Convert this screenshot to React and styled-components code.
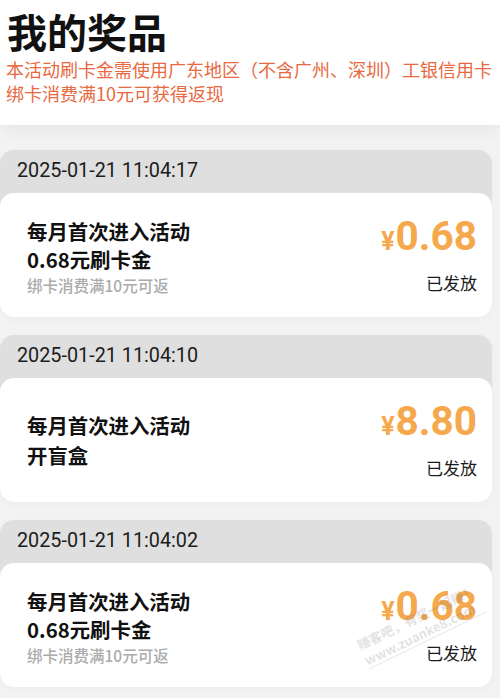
import styled, { createGlobalStyle } from "styled-components";

const GlobalStyle = createGlobalStyle`
  body {
    margin: 0;
    background: #f3f3f3;
    font-family: Roboto, "Noto Sans CJK SC", sans-serif;
  }
`;

const Page = styled.div`
  position: relative;
  width: 500px;
  height: 698px;
  overflow: hidden;
  background: #f3f3f3;
`;

const Header = styled.div`
  background: #fff;
  height: 125px;
  box-sizing: border-box;
  padding: 8px 6px 0 7px;
  box-shadow: 0 6px 14px rgba(0, 0, 0, 0.05);
`;

const Title = styled.h1`
  margin: 0;
  font-size: 40px;
  line-height: 46px;
  font-weight: 700;
  color: #111;
  font-family: "Noto Sans CJK SC", sans-serif;
`;

const Notice = styled.p`
  margin: 3px 0 0 -1px;
  font-size: 18px;
  line-height: 24px;
  color: #e8693f;
  font-family: "Noto Sans CJK SC", sans-serif;
`;

const List = styled.div`
  display: flex;
  flex-direction: column;
  gap: 18px;
  padding: 25px 8px 0 0;
`;

const Card = styled.div`
  background: #dfdfdf;
  border-radius: 14px;
  box-shadow: 0 2px 8px rgba(0, 0, 0, 0.03);
`;

const Stamp = styled.div`
  height: 43px;
  display: flex;
  align-items: center;
  padding: 0 0 3px 17px;
  box-sizing: border-box;
  font-size: 19.8px;
  color: #1c1c1c;
`;

const Body = styled.div`
  height: 124px;
  background: #fff;
  border-radius: 14px;
  display: flex;
  align-items: center;
  justify-content: space-between;
  padding: 0 15px 0 27px;
`;

const Info = styled.div`
  display: flex;
  flex-direction: column;
  font-family: "Noto Sans CJK SC", sans-serif;
  padding-top: ${(p) => (p.$short ? "0" : "3px")};
`;

const Line = styled.div`
  font-size: 20.4px;
  line-height: ${(p) => (p.$short ? "30px" : "28px")};
  font-weight: 700;
  color: #111;
`;

const Hint = styled.div`
  font-size: 15.5px;
  line-height: 24px;
  font-weight: 500;
  color: #ababab;
`;

const Side = styled.div`
  display: flex;
  flex-direction: column;
  align-items: flex-end;
  gap: 9px;
`;

const Amount = styled.div`
  color: #f6a84c;
  font-weight: 700;
  font-size: 40.5px;
  line-height: 40px;
  display: flex;
  align-items: baseline;
`;

const Yen = styled.span`
  font-size: 25px;
  margin-right: 1px;
`;

const Status = styled.div`
  font-size: 17px;
  line-height: 24px;
  color: #1c1c1c;
  font-family: "Noto Sans CJK SC", sans-serif;
`;

const Watermark = styled.div`
  position: absolute;
  left: 354px;
  top: 638px;
  transform: rotate(-26deg);
  transform-origin: left top;
  color: rgba(120, 120, 120, 0.22);
  font-family: "Noto Sans CJK SC", sans-serif;
  font-weight: 700;
  font-size: 13px;
  line-height: 17px;
  pointer-events: none;
  border-bottom: 1px solid rgba(120, 120, 120, 0.16);
`;

const prizes = [
  { time: "2025-01-21 11:04:17", lines: ["每月首次进入活动", "0.68元刷卡金"], hint: "绑卡消费满10元可返", amount: "0.68" },
  { time: "2025-01-21 11:04:10", lines: ["每月首次进入活动", "开盲盒"], amount: "8.80" },
  { time: "2025-01-21 11:04:02", lines: ["每月首次进入活动", "0.68元刷卡金"], hint: "绑卡消费满10元可返", amount: "0.68" },
];

function PrizeCard({ prize }) {
  const short = !prize.hint;
  return (
    <Card>
      <Stamp>{prize.time}</Stamp>
      <Body>
        <Info $short={short}>
          {prize.lines.map((l) => (
            <Line key={l} $short={short}>{l}</Line>
          ))}
          {prize.hint && <Hint>{prize.hint}</Hint>}
        </Info>
        <Side>
          <Amount>
            <Yen>¥</Yen>
            {prize.amount}
          </Amount>
          <Status>已发放</Status>
        </Side>
      </Body>
    </Card>
  );
}

export default function App() {
  return (
    <Page>
      <GlobalStyle />
      <Header>
        <Title>我的奖品</Title>
        <Notice>
          本活动刷卡金需使用广东地区（不含广州、深圳）工银信用卡
          <br />
          绑卡消费满10元可获得返现
        </Notice>
      </Header>
      <List>
        {prizes.map((p) => (
          <PrizeCard key={p.time} prize={p} />
        ))}
      </List>
      <Watermark>
        赚客吧，有奖一起赚！
        <br />
        www.zuanke8.com
      </Watermark>
    </Page>
  );
}
